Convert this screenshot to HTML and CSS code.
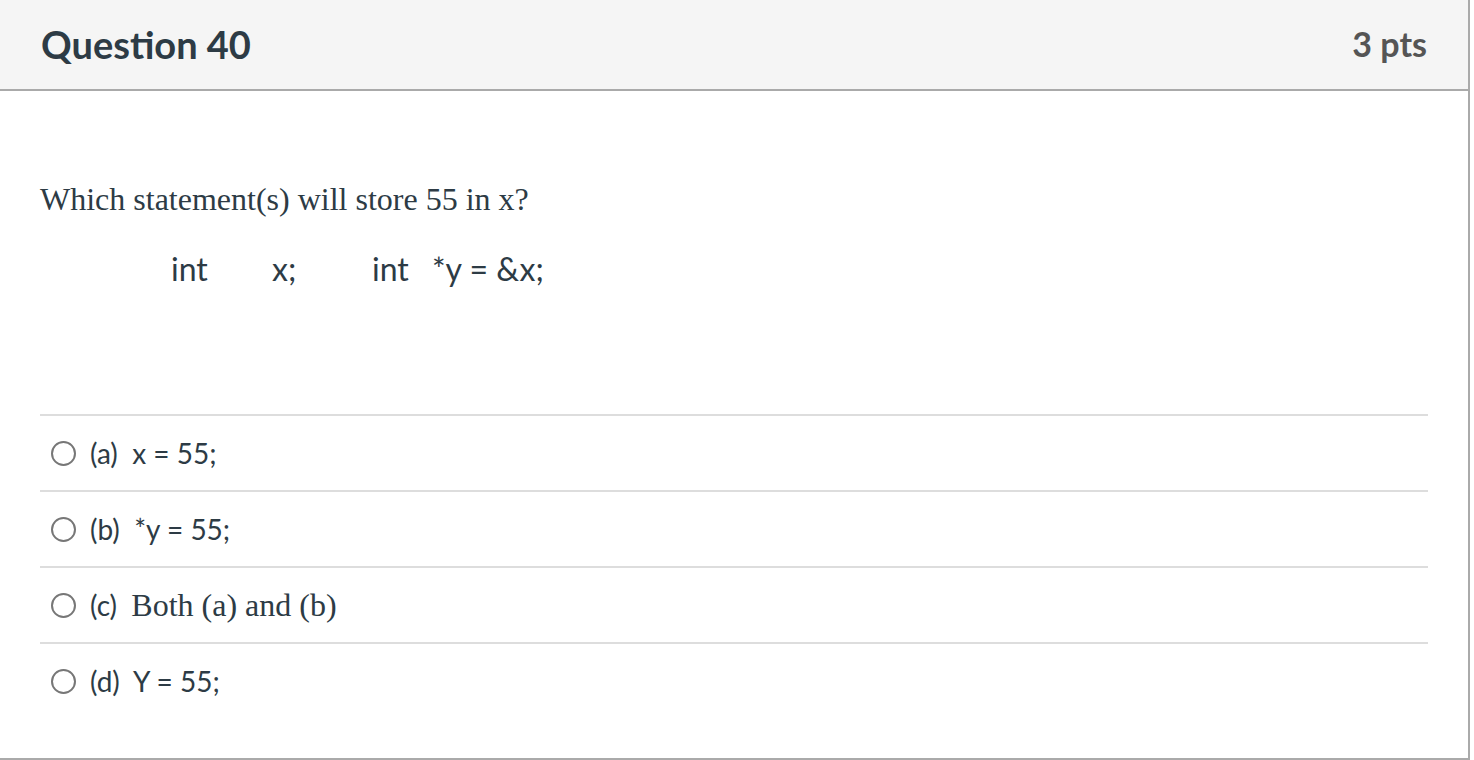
FILE: index.html
```html
<!DOCTYPE html>
<html>
<head>
<meta charset="utf-8">
<link rel="stylesheet" href="styles.css">
</head>
<body>
<div class="card">
  <div class="header">
    <h2 class="title">Question 40</h2>
    <div class="pts">3 pts</div>
  </div>
  <div class="body">
    <p class="qtext">Which statement(s) will store 55 in x?</p>
    <div class="code">
      <span class="c1">int</span><span class="c2">x;</span><span class="c3">int</span><span class="c4">*y = &amp;x;</span>
    </div>
    <div class="answers">
      <div class="answer"><span class="radio"></span><span class="label">(a)&nbsp; x = 55;</span></div>
      <div class="answer"><span class="radio"></span><span class="label">(b)&nbsp; *y = 55;</span></div>
      <div class="answer"><span class="radio"></span><span class="label">(c)&nbsp; <span class="serif">Both (a) and (b)</span></span></div>
      <div class="answer"><span class="radio"></span><span class="label">(d)&nbsp; Y = 55;</span></div>
    </div>
  </div>
</div>
</body>
</html>
```

FILE: styles.css
```css
html, body {
  margin: 0;
  padding: 0;
  background: #ffffff;
}
body {
  font-family: Lato, "Liberation Sans", sans-serif;
  color: #2d3b45;
}
.card {
  width: 1468px;
  height: 758px;
  border-right: 2px solid #aaaaaa;
  border-bottom: 2px solid #aaaaaa;
  background: #ffffff;
}
.header {
  background: #f5f5f5;
  border-bottom: 2px solid #aaaaaa;
  display: flex;
  align-items: center;
  justify-content: space-between;
  padding: 0 41px 2px 41px;
  box-sizing: border-box;
  height: 91px;
}
.title {
  margin: 0;
  font-size: 38px;
  font-weight: 700;
  color: #2d3b45;
}
.pts {
  font-size: 34px;
  font-weight: 700;
  color: #555555;
}
.body {
  padding: 0 40px;
}
.qtext {
  margin: 0;
  padding-top: 88px;
  font-family: "Liberation Serif", serif;
  font-size: 32px;
  line-height: 40px;
}
.code {
  display: flex;
  padding-left: 131px;
  margin-top: 30px;
  font-size: 32px;
  line-height: 40px;
}
.c1 { width: 101px; }
.c2 { width: 100px; }
.c3 { width: 60px; }
.answers {
  margin-top: 125px;
}
.answer {
  height: 74px;
  border-top: 2px solid #dddddd;
  display: flex;
  align-items: center;
  font-size: 28px;
}
.radio {
  border: 2px solid #777777;
  border-radius: 50%;
  margin-left: 11px;
  margin-right: 14px;
  box-sizing: border-box;
  width: 25px;
  height: 25px;
  flex: none;
}
.serif {
  font-family: "Liberation Serif", serif;
  font-size: 32px;
}
```
